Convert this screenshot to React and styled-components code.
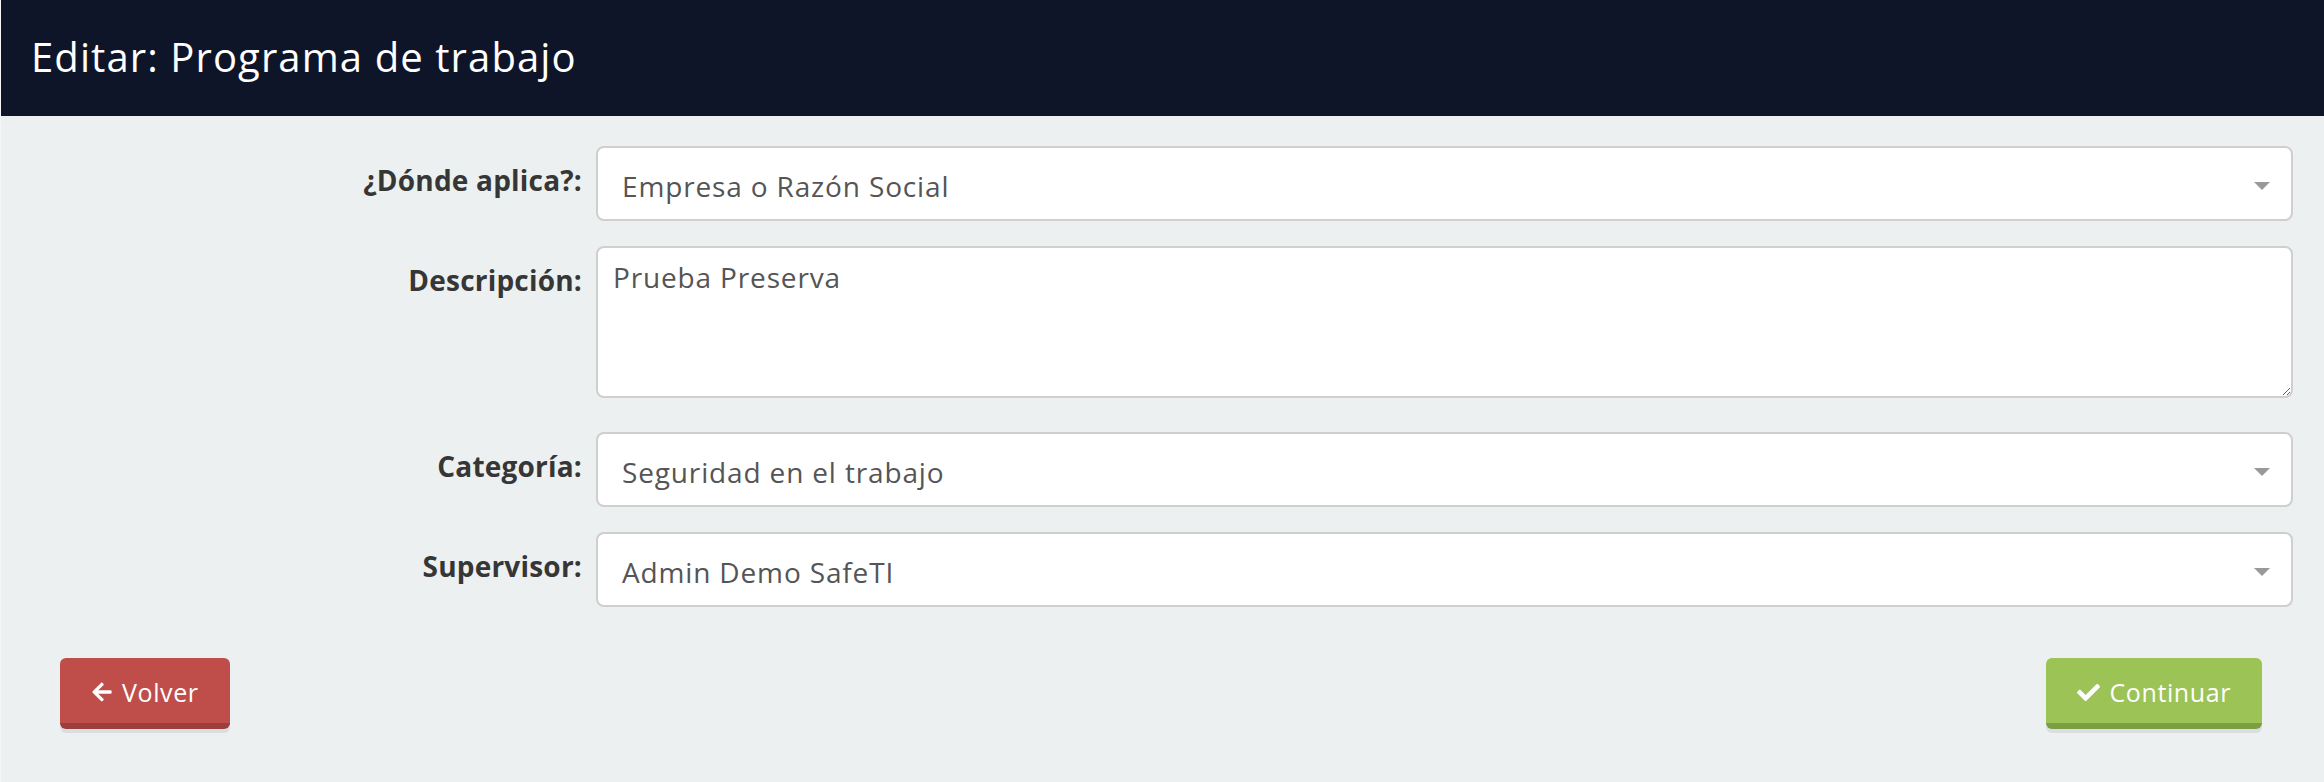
import styled, { createGlobalStyle } from "styled-components";
import { FaArrowLeft, FaCheck } from "react-icons/fa";

const GlobalStyle = createGlobalStyle`
  html, body {
    margin: 0;
    padding: 0;
    background: #ecf0f1;
  }
  * {
    box-sizing: border-box;
  }
`;

const fields = [
  { label: "¿Dónde aplica?:", value: "Empresa o Razón Social" },
  { label: "Descripción:", value: "Prueba Preserva", multiline: true },
  { label: "Categoría:", value: "Seguridad en el trabajo" },
  { label: "Supervisor:", value: "Admin Demo SafeTI" },
];

export default function App() {
  return (
    <Page>
      <GlobalStyle />
      <Header>
        <Title>Editar: Programa de trabajo</Title>
      </Header>
      <Form onSubmit={(e) => e.preventDefault()}>
        {fields.map((f) => (
          <FormRow key={f.label} multiline={f.multiline}>
            <Label>{f.label}</Label>
            {f.multiline ? (
              <TextArea defaultValue={f.value} />
            ) : (
              <SelectBox>
                <SelectText>{f.value}</SelectText>
                <Caret />
              </SelectBox>
            )}
          </FormRow>
        ))}
      </Form>
      <Actions>
        <Button type="button" variant="danger">
          <FaArrowLeft size={22} />
          Volver
        </Button>
        <Button type="button" variant="success">
          <FaCheck size={23} />
          Continuar
        </Button>
      </Actions>
    </Page>
  );
}

const Page = styled.div`
  min-height: 782px;
  background: #ecf0f1;
  border-left: 1px solid #f4f6f7;
  font-family: "Open Sans", "Lato", sans-serif;
`;

const Header = styled.header`
  height: 116px;
  background: #0f1529;
  padding: 33px 30px 0;
`;

const Title = styled.h1`
  margin: 0;
  color: #ffffff;
  font-size: 40px;
  font-weight: 400;
  letter-spacing: 1.1px;
  line-height: 1.2;
`;

const Form = styled.form`
  display: flex;
  flex-direction: column;
  gap: 25px;
  padding: 30px 31px 0 0;
`;

const FormRow = styled.div`
  display: grid;
  grid-template-columns: 581px 1fr;
  column-gap: 14px;
  align-items: start;
  margin-bottom: ${(p) => (p.multiline ? "9px" : "0")};
`;

const Label = styled.label`
  text-align: right;
  font-size: 28px;
  font-weight: 700;
  letter-spacing: 0.2px;
  line-height: 1.2;
  color: #363636;
  padding-top: 18px;
`;

const SelectBox = styled.div`
  position: relative;
  height: 75px;
  background: #ffffff;
  border: 2px solid #cfcfcf;
  border-radius: 8px;
  padding: 22px 60px 0 24px;
`;

const SelectText = styled.span`
  display: block;
  font-size: 28px;
  letter-spacing: 0.85px;
  line-height: 1.2;
  color: #555555;
  white-space: nowrap;
`;

const Caret = styled.span`
  position: absolute;
  right: 21px;
  top: 34px;
  width: 0;
  height: 0;
  border-left: 8px solid transparent;
  border-right: 8px solid transparent;
  border-top: 8px solid #999999;
`;

const TextArea = styled.textarea`
  display: block;
  width: 100%;
  height: 152px;
  background: #ffffff;
  border: 2px solid #cfcfcf;
  border-radius: 8px;
  padding: 13px 15px;
  font-family: "Open Sans", "Lato", sans-serif;
  font-size: 28px;
  letter-spacing: 0.85px;
  line-height: 1.2;
  color: #555555;
  outline: none;
  resize: both;
`;

const Actions = styled.div`
  display: flex;
  justify-content: space-between;
  padding: 51px 62px 0 59px;
`;

const Button = styled.button`
  display: inline-flex;
  align-items: center;
  gap: 9px;
  height: 71px;
  padding: 3px 31px 0;
  border: none;
  border-bottom: 6px solid
    ${(p) => (p.variant === "danger" ? "#9c3e3b" : "#7c9e43")};
  border-radius: 6px;
  background: ${(p) => (p.variant === "danger" ? "#bf4e4b" : "#9bc355")};
  box-shadow: 0 4px 0 #dadee0;
  color: #ffffff;
  font-family: "Open Sans", "Lato", sans-serif;
  font-size: 25px;
  letter-spacing: 0.6px;
  cursor: pointer;
`;
